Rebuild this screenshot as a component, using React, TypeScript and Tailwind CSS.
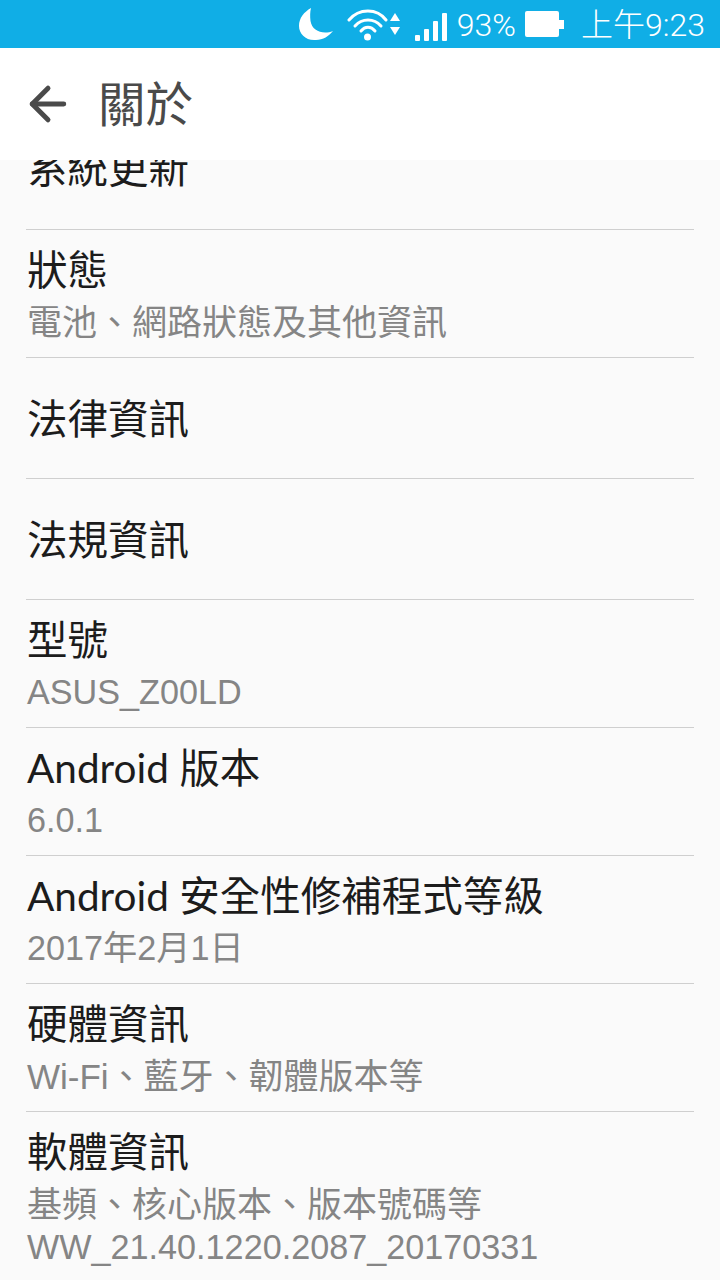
import { ArrowLeft } from 'lucide-react';

const cjk = "font-['Lato','Noto_Sans_CJK_TC',sans-serif]";
const statusFont = "font-['Roboto','Noto_Sans_CJK_TC',sans-serif]";
const subFont = "font-['Liberation_Sans','Noto_Sans_CJK_TC',sans-serif]";

type Sub = { text: string; size: string };
type Row = { title: string; subs?: Sub[]; h: string };

const rows: Row[] = [
  { title: '狀態', subs: [{ text: '電池、網路狀態及其他資訊', size: 'text-[35px]' }], h: 'h-[128px]' },
  { title: '法律資訊', h: 'h-[121px]' },
  { title: '法規資訊', h: 'h-[121px]' },
  { title: '型號', subs: [{ text: 'ASUS_Z00LD', size: 'text-[34.200px]' }], h: 'h-[128px]' },
  { title: 'Android 版本', subs: [{ text: '6.0.1', size: 'text-[34.200px]' }], h: 'h-[128px]' },
  { title: 'Android 安全性修補程式等級', subs: [{ text: '2017年2月1日', size: 'text-[34.200px]' }], h: 'h-[128px]' },
  { title: '硬體資訊', subs: [{ text: 'Wi-Fi、藍牙、韌體版本等', size: 'text-[35px]' }], h: 'h-[128px]' },
  {
    title: '軟體資訊',
    subs: [
      { text: '基頻、核心版本、版本號碼等', size: 'text-[35px]' },
      { text: 'WW_21.40.1220.2087_20170331', size: 'text-[34.200px]' },
    ],
    h: 'h-[169px]',
  },
];

const StatusIcons = () => (
  <>
    {/* moon */}
    <svg width="36" height="36" viewBox="0 0 36 36" className="mr-[13px]">
      <path d="M13 2 C6 6 1 12 1 20 C1 28 8 35 18 34 C25 34 31 30 35 25 C25 29 14 25 12.500 15 C12 10 12 6 13 2 Z" fill="#fff" />
    </svg>
    {/* wifi with up/down arrows */}
    <svg width="56" height="34" viewBox="0 0 56 34" className="mr-[12px]">
      <g fill="none" stroke="#fff" strokeWidth="3" strokeLinecap="round">
        <path d="M2 13 C12 1 30 1 39 13" />
        <path d="M8 19 C15 11 27 11 34 19" />
        <path d="M14 24 C18 19 24 19 28 24" />
      </g>
      <circle cx="20.500" cy="30" r="3.500" fill="#fff" />
      <path d="M43 14 L48 6 L53 14 Z M43 20 L53 20 L48 28 Z" fill="#fff" />
    </svg>
    {/* signal bars */}
    <div className="flex items-end gap-[4px] h-[28px] mr-[10px] mt-[6px]">
      <div className="w-[5px] h-[6px] bg-white rounded-[1px]" />
      <div className="w-[5px] h-[12px] bg-white rounded-[1px]" />
      <div className="w-[5px] h-[20px] bg-white rounded-[1px]" />
      <div className="w-[5px] h-[28px] bg-white rounded-[1px]" />
    </div>
    <span className={`text-[32px] leading-none font-light text-white mr-[9px] mt-[2px] ${statusFont}`}>93%</span>
    {/* battery */}
    <div className="flex items-center mr-[17px]">
      <div className="w-[34px] h-[26px] bg-white rounded-[2px]" />
      <div className="w-[5px] h-[9px] bg-white" />
    </div>
    <span className={`text-[32px] leading-none font-light text-white mt-[2px] ${statusFont}`}>上午9:23</span>
  </>
);

export default function App() {
  return (
    <div className={`w-[720px] h-[1280px] overflow-hidden flex flex-col bg-[#fafafa] ${cjk}`}>
      {/* status bar */}
      <div className="h-[48px] shrink-0 bg-[#10aee6] flex items-center justify-end pr-[15px]">
        <StatusIcons />
      </div>

      {/* toolbar */}
      <div className="h-[112px] shrink-0 bg-white flex items-center pl-[21px] z-10">
        <ArrowLeft size={54} strokeWidth={2.200} color="#4a4a4a" />
        <span className="ml-[23px] text-[47.500px] leading-none text-[#4a4a4a]">關於</span>
      </div>

      {/* settings list, scrolled so the first row is cut off under the toolbar */}
      <div className="flex-1 overflow-hidden px-[26px]">
        <div className="h-[70px] border-b border-[#cfcfcf] overflow-hidden">
          <div className="-mt-[21px] pl-[1px] text-[40.500px] leading-[58px] text-[#1c1c1c]">系統更新</div>
        </div>
        {rows.map((r) => (
          <div key={r.title} className={`${r.h} pl-[1px] border-b border-[#cfcfcf] last:border-b-0 flex flex-col ${r.subs ? 'pt-[11px]' : 'justify-center pt-[2px]'}`}>
            <div className="text-[40.500px] leading-[58px] text-[#1c1c1c]">{r.title}</div>
            {r.subs?.map((s, i) => (
              <div key={s.text} className={`${s.size} leading-[43px] text-[#858585] ${i === 0 ? 'mt-[2px]' : ''} ${subFont}`}>{s.text}</div>
            ))}
          </div>
        ))}
      </div>
    </div>
  );
}
